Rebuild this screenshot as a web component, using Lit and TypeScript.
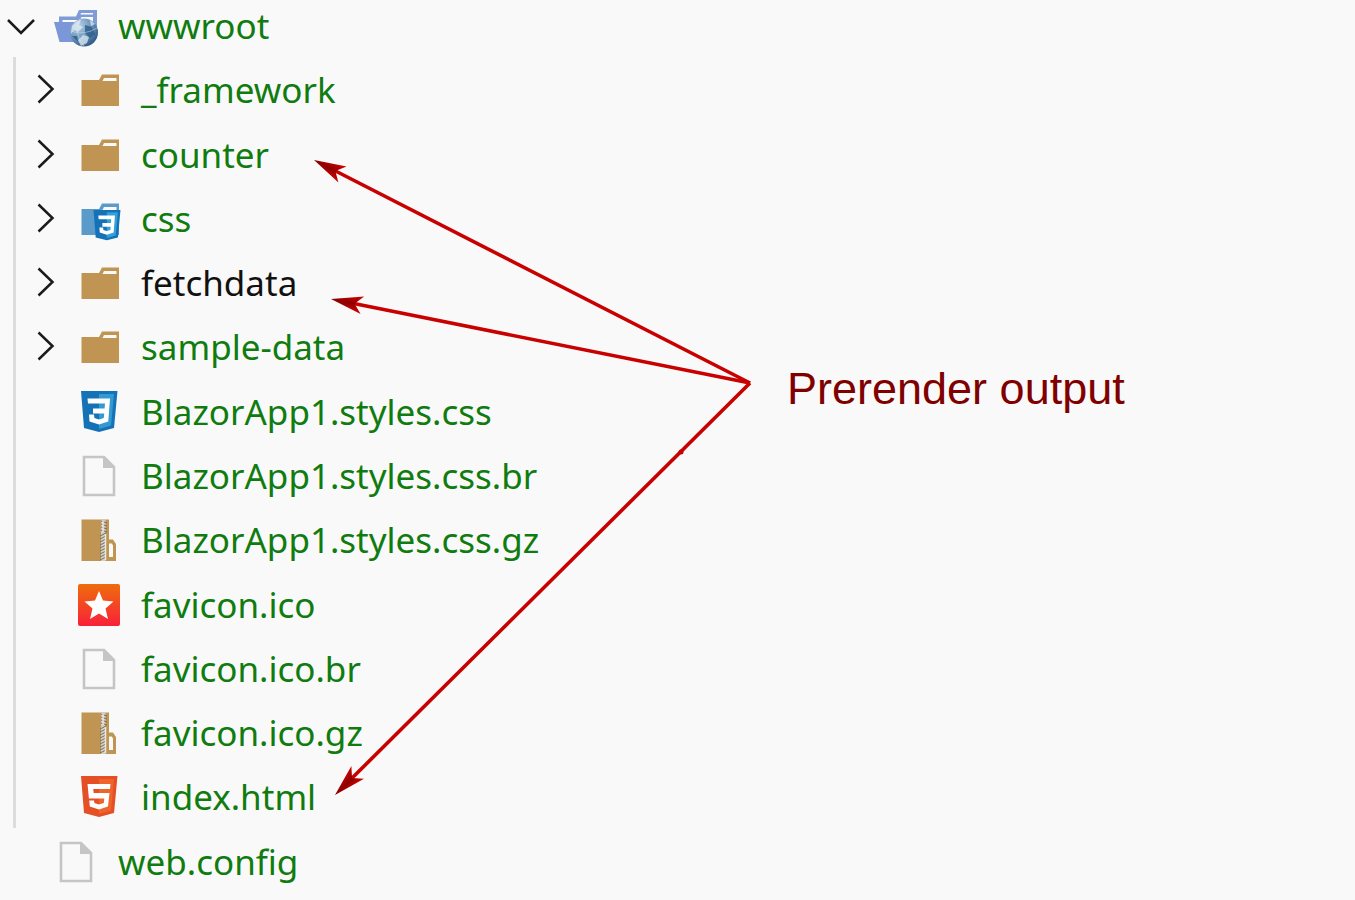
import { LitElement, html, svg, css } from "lit";
import { customElement, property, state } from "lit/decorators.js";

type Kind = "web" | "folder" | "cssFolder" | "css" | "file" | "zip" | "icon" | "html";

interface Entry {
  name: string;
  kind: Kind;
  folder?: boolean;
  untracked?: boolean;
}

const entries: Entry[] = [
  { name: "_framework", kind: "folder", folder: true },
  { name: "counter", kind: "folder", folder: true },
  { name: "css", kind: "cssFolder", folder: true },
  { name: "fetchdata", kind: "folder", folder: true, untracked: true },
  { name: "sample-data", kind: "folder", folder: true },
  { name: "BlazorApp1.styles.css", kind: "css" },
  { name: "BlazorApp1.styles.css.br", kind: "file" },
  { name: "BlazorApp1.styles.css.gz", kind: "zip" },
  { name: "favicon.ico", kind: "icon" },
  { name: "favicon.ico.br", kind: "file" },
  { name: "favicon.ico.gz", kind: "zip" },
  { name: "index.html", kind: "html" },
];

const folderPath = "M2.500 11H20L23 5.500H40V37H2.500Z M25 9L23.500 12H37.500V9Z";

const shield = (dark: string, light: string, glyph: unknown) => svg`
  <path d="M2 0H38.5L35 37L20 41L5 37Z" fill=${dark}/>
  <path d="M20 3H35L32 34.5L20 38Z" fill=${light}/>
  ${glyph}`;

const three = svg`<path d="M8.500 7.500H31L29.300 30.500L20 33.500L10.500 30.500L10 23.500H15L15.400 27L20 28.500L24.800 27L25.200 22.500H14V17.500H25.600L26 12.500H9Z" fill="#fff"/>`;

const five = svg`<path d="M8.500 8H31.500L31 13H14.200L14.700 17H30.500L29 30.500L20 33.500L10.800 30.500L10.200 24.500H15L15.400 27L20 28.500L24.800 27L25.300 22.500H9.900Z" fill="#fff"/>`;

const pictures: Record<Kind, unknown> = {
  folder: svg`<path d=${folderPath} fill="#c09553" fill-rule="evenodd"/>`,
  cssFolder: svg`
    <path d=${folderPath} fill="#5a9bca" fill-rule="evenodd"/>
    <g transform="translate(13 12) scale(.74 .74)">${shield("#1572b6", "#33a0d8", three)}</g>`,
  web: svg`
    <path d="M3 18V11.500H20L23 5H41V24H37V12H25.500L24 15H6.500V18Z M25 8L24.500 9.500H37V8Z" fill="#819bd8" fill-rule="evenodd"/>
    <path d="M-2 17H30V37H3.500Z" fill="#7b97d8"/>
    <circle cx="28" cy="27.500" r="14" fill="url(#globe)"/>
    <path d="M16 21L21 16L25 15L23 20L27 22L22 27L18 25L15 29Z M27 30L33 32L31 38L25 41L22 35Z M34 15L39 19L35 21Z" fill="#e0ebf3" opacity=".75"/>
    <path d="M29 20L36 22L39 29L34 33L29 28Z M16 31L21 31L22 37Z" fill="#315f8e" opacity=".85"/>
    <path d="M15 26Q28 31 41 23M24 14Q17 28 28 41" fill="none" stroke="#d5e3ee" stroke-width="1" opacity=".5"/>`,
  css: shield("#1572b6", "#3399d3", three),
  html: shield("#e44f26", "#ef642a", five),
  file: svg`
    <path d="M5 2H25L35 12V40H5Z" fill="#f9f9f9" stroke="#c5c5c5" stroke-width="2.600"/>
    <path d="M24 1L36 13H24Z" fill="#c5c5c5"/>`,
  zip: svg`
    <path d="M2.500 0.500H30V20.500H34L37 25V42H2.500Z M30 24.500V38H34V26.500L32.800 24.500Z" fill="#c09553" fill-rule="evenodd"/>
    <path d="M22 0.500H26.500V42H22Z" fill="#d4cfc4"/>
    <path d="M22 2L28 4M22 5L28 7M22 8L28 10M22 11L28 13M21 17L27 14M21 20L27 17M21 23L27 20M21 26L27 23M21 29L27 26M21 32L27 29M21 35L27 32M21 38L27 35M21 41L27 38" stroke="#756d61" stroke-width="1"/>
    <path d="M24 2V13M26.500 15V41" stroke="#ece8df" stroke-width="1.500"/>`,
  icon: svg`
    <rect x="-1" y="0" width="42" height="42" rx="2" fill="url(#flame)"/>
    <path d="M20 7L24 16.500L34.500 17.500L26.500 24.500L29 35L20 29.500L11 35L13.500 24.500L5.500 17.500L16 16.500Z" fill="#fff"/>`,
};

@customElement("file-icon")
export class FileIcon extends LitElement {
  @property() kind: Kind = "file";

  static styles = css`
    :host { display: block; width: 42px; height: 42px; }
    .picture { display: block; width: 100%; height: 100%; overflow: visible; }
  `;

  render() {
    return html`<svg class="picture" viewBox="0 0 42 42" aria-hidden="true">
      <defs>
        <linearGradient id="flame" x1="0" y1="0" x2="0" y2="1">
          <stop offset="0" stop-color="#ee6d0c"/>
          <stop offset="1" stop-color="#f9203a"/>
        </linearGradient>
        <radialGradient id="globe" cx=".3" cy=".25" r=".9">
          <stop offset="0" stop-color="#b8d2e6"/>
          <stop offset=".55" stop-color="#6591b9"/>
          <stop offset="1" stop-color="#1f4877"/>
        </radialGradient>
      </defs>
      ${pictures[this.kind]}
    </svg>`;
  }
}

@customElement("app-root")
export class AppRoot extends LitElement {
  @state() private open = true;

  static styles = css`
    :host {
      display: block;
      position: relative;
      min-height: 100vh;
      overflow: hidden;
      background: #f9f9f9;
      font-family: "Noto Sans", "Open Sans", sans-serif;
    }
    .tree, .group { list-style: none; margin: 0; padding: 0; }
    .tree {
      display: grid;
      grid-template-rows: repeat(14, 1fr);
      min-height: 100vh;
    }
    .branch { display: grid; grid-row: span 13; grid-template-rows: subgrid; }
    .group {
      position: relative;
      display: grid;
      grid-row: span 12;
      grid-template-rows: subgrid;
      padding-left: 23px;
    }
    .group::before {
      content: "";
      position: absolute;
      top: -7px;
      bottom: 8px;
      left: 13px;
      width: 3px;
      background: #dcdcdc;
    }
    .row {
      display: grid;
      grid-template-columns: 42px 42px 1fr;
      align-items: center;
      column-gap: 14px;
      height: 52px;
      color: #107c10;
    }
    .name {
      margin-left: 6px;
      font-size: 35px;
      line-height: 52px;
      white-space: nowrap;
    }
    .untracked { color: #111; }
    .toggle {
      display: block;
      width: 42px;
      height: 42px;
      padding: 0;
      border: 0;
      background: none;
      color: #1b1b1b;
    }
    .chevron { display: block; }
    .arrows {
      position: absolute;
      top: 0;
      left: 0;
      pointer-events: none;
    }
    .note {
      position: absolute;
      top: 363px;
      left: 787px;
      margin: 0;
      color: #800000;
      font: 45px/52px "Liberation Sans", Arial, sans-serif;
      white-space: nowrap;
    }
  `;

  private chevron(label: string, down = false) {
    return html`<button class="toggle" aria-label=${label} aria-expanded=${down}
      @click=${down ? () => (this.open = !this.open) : null}>
      <svg class="chevron" width="42" height="42" viewBox="0 0 42 42" fill="none" stroke="currentColor" stroke-width="2.5">
        <path d=${down ? "M8 15L21 28L34 15" : "M15.500 6.500L29.500 20L15.500 33.500"}/>
      </svg>
    </button>`;
  }

  private row(e: Entry, down = false) {
    return html`<div class="row ${e.untracked ? "untracked" : ""}">
      ${e.folder ? this.chevron(e.name, down) : html`<span></span>`}
      <file-icon .kind=${e.kind}></file-icon>
      <span class="name">${e.name}</span>
    </div>`;
  }

  private arrow(x: number, y: number) {
    const angle = (Math.atan2(383 - y, 750 - x) * 180) / Math.PI;
    const length = Math.hypot(383 - y, 750 - x);
    return svg`<g transform="translate(${x} ${y}) rotate(${angle})">
      <path d="M22 0H${length}" stroke="#c80000" stroke-width="3.600"/>
      <path d="M0 0L32 -9L24 0L32 9Z" fill="url(#head)"/>
    </g>`;
  }

  render() {
    return html`
      <ul class="tree">
        <li class="branch">
          ${this.row({ name: "wwwroot", kind: "web", folder: true }, this.open)}
          ${this.open
            ? html`<ul class="group">${entries.map((e) => html`<li>${this.row(e)}</li>`)}</ul>`
            : null}
        </li>
        <li>${this.row({ name: "web.config", kind: "file" })}</li>
      </ul>
      <svg class="arrows" width="780" height="900" viewBox="0 0 780 900" aria-hidden="true">
        <defs>
          <linearGradient id="head" x1="0" y1="0" x2="0" y2="1">
            <stop offset="0" stop-color="#d80000"/>
            <stop offset=".5" stop-color="#8c0000"/>
            <stop offset="1" stop-color="#d80000"/>
          </linearGradient>
        </defs>
        ${this.arrow(314, 160)}${this.arrow(331, 299)}${this.arrow(335, 795)}
        <circle cx="681" cy="452" r="2.500" fill="#c80000"/>
      </svg>
      <p class="note">Prerender output</p>
    `;
  }
}
